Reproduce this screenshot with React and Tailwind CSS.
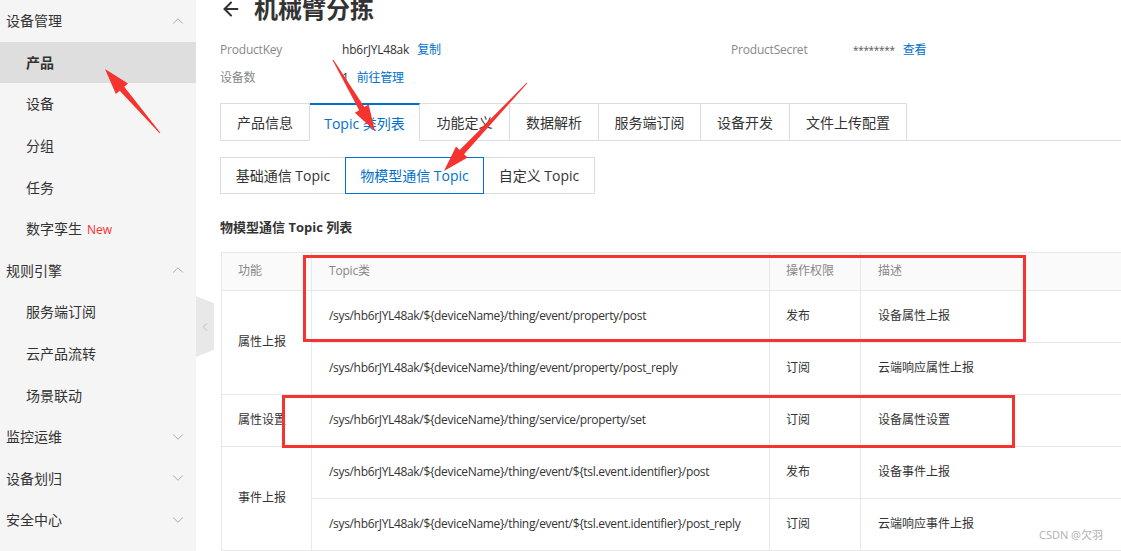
import React from "react";
import { ChevronUp, ChevronDown, ChevronLeft, ArrowLeft } from "lucide-react";

const FONT = { fontFamily: '"Open Sans", "Noto Sans CJK SC", sans-serif' };

const menu = [
  { label: "设备管理", top: true, open: true },
  { label: "产品", active: true },
  { label: "设备" },
  { label: "分组" },
  { label: "任务" },
  { label: "数字孪生", isNew: true },
  { label: "规则引擎", top: true, open: true },
  { label: "服务端订阅" },
  { label: "云产品流转" },
  { label: "场景联动" },
  { label: "监控运维", top: true },
  { label: "设备划归", top: true },
  { label: "安全中心", top: true },
];

const tabs = [
  { label: "产品信息", w: "w-[90px]" },
  { label: "Topic 类列表", w: "w-[110px]", active: true },
  { label: "功能定义", w: "w-[90px]" },
  { label: "数据解析", w: "w-[89px]" },
  { label: "服务端订阅", w: "w-[102px]" },
  { label: "设备开发", w: "w-[89px]" },
  { label: "文件上传配置", w: "w-[117px]" },
];

const subTabs = [
  { label: "基础通信 Topic", w: "w-[125px]" },
  { label: "物模型通信 Topic", w: "w-[139px]", active: true },
  { label: "自定义 Topic", w: "w-[111px]" },
];

const P = "/sys/hb6rJYL48ak/${deviceName}/thing";
const rows = [
  { fn: "属性上报", span: 2, topic: `${P}/event/property/post`, perm: "发布", desc: "设备属性上报" },
  { topic: `${P}/event/property/post_reply`, perm: "订阅", desc: "云端响应属性上报" },
  { fn: "属性设置", span: 1, topic: `${P}/service/property/set`, perm: "订阅", desc: "设备属性设置" },
  { fn: "事件上报", span: 2, topic: `${P}/event/\${tsl.event.identifier}/post`, perm: "发布", desc: "设备事件上报" },
  { topic: `${P}/event/\${tsl.event.identifier}/post_reply`, perm: "订阅", desc: "云端响应事件上报" },
];

// red annotation arrow, tail -> tip
function Arrow({ x1, y1, x2, y2 }) {
  const dx = x2 - x1, dy = y2 - y1;
  const len = Math.hypot(dx, dy);
  const ux = dx / len, uy = dy / len;
  const nx = -uy, ny = ux;
  const head = 26, hw = 8, sw = 3;
  const bx = x2 - ux * head, by = y2 - uy * head;
  const pts = [
    [x1 + nx * 0.5, y1 + ny * 0.5],
    [bx + nx * sw, by + ny * sw],
    [bx + nx * hw, by + ny * hw],
    [x2, y2],
    [bx - nx * hw, by - ny * hw],
    [bx - nx * sw, by - ny * sw],
    [x1 - nx * 0.5, y1 - ny * 0.5],
  ];
  return <polygon points={pts.map((p) => p.join(",")).join(" ")} fill="#f5332f" />;
}

export default function App() {
  return (
    <div className="relative flex h-[551px] w-[1121px] overflow-hidden bg-white text-[#333]" style={FONT}>
      <aside className="w-[196px] shrink-0 bg-[#f5f5f5]">
        {menu.map((m) => (
          <div
            key={m.label}
            className={`flex h-[41.6px] items-center justify-between pr-[9px] ${m.top ? "pl-[6px]" : "pl-[26px]"} ${m.active ? "bg-[#dedede] font-bold" : ""}`}
          >
            <span className="text-[14px] text-[#333]">
              {m.label}
              {m.isNew && <span className="ml-[5px] text-[12px] text-[#ff2d2d]">New</span>}
            </span>
            {m.top && (m.open ? <ChevronUp size={18} strokeWidth={1.3} className="text-[#aaa]" /> : <ChevronDown size={18} strokeWidth={1.3} className="text-[#aaa]" />)}
          </div>
        ))}
      </aside>

      <div
        className="absolute left-[196px] top-[296px] flex h-[61px] w-[18px] items-center justify-center bg-[#e8e8e8]"
        style={{ clipPath: "polygon(0 0, 100% 12%, 100% 88%, 0 100%)" }}
      >
        <ChevronLeft size={14} strokeWidth={1.5} className="text-[#bbb]" />
      </div>

      <main className="min-w-0 flex-1 pl-[24px]">
        <div className="-mt-[10px] flex h-[38px] items-center gap-[12px]">
          <ArrowLeft size={22} strokeWidth={2.2} className="text-[#333]" />
          <h1 className="text-[24px] font-bold leading-none text-[#333]">机械臂分拣</h1>
        </div>

        <div className="mt-[8px] grid grid-cols-[122px_389px_122px_auto] text-[12px] tracking-[-0.2px]">
          <div className="flex h-[28px] items-center text-[#888]">ProductKey</div>
          <div className="flex h-[28px] items-center">
            <span className="text-[#333]">hb6rJYL48ak</span>
            <span className="ml-[8px] text-[#0070cc]">复制</span>
          </div>
          <div className="flex h-[28px] items-center text-[#888]">ProductSecret</div>
          <div className="flex h-[28px] items-center">
            <span className="text-[10px] tracking-[-0.3px] text-[#555]">********</span>
            <span className="ml-[8px] text-[#0070cc]">查看</span>
          </div>
          <div className="flex h-[28px] items-center text-[#888]">设备数</div>
          <div className="flex h-[28px] items-center">
            <span className="text-[#333]">1</span>
            <span className="ml-[8px] text-[#0070cc]">前往管理</span>
          </div>
        </div>

        <div className="mt-[11px] flex h-[38px] border-b border-[#ddd]">
          {tabs.map((t, i) => (
            <div
              key={t.label}
              className={`${t.w} flex items-center justify-center pt-px text-[14px] ${i === 0 ? "border-l" : ""} border-r border-[#ddd] ${
                t.active ? "-mb-px border-t-2 border-t-[#0070cc] bg-white text-[#0070cc]" : "border-t text-[#333]"
              }`}
            >
              {t.label}
            </div>
          ))}
        </div>

        <div className="mt-[16px] flex h-[37px]">
          {subTabs.map((t, i) => (
            <div
              key={t.label}
              className={`${t.w} flex items-center justify-center text-[14px] ${
                t.active ? "border border-[#0070cc] text-[#0070cc]" : `border-y border-[#ddd] ${i === 0 ? "border-l" : "border-r"} text-[#333]`
              }`}
            >
              {t.label}
            </div>
          ))}
        </div>

        <h2 className="mt-[24px] text-[13px] font-bold text-[#333]">物模型通信 Topic 列表</h2>

        <table className="ml-px mt-[14px] w-[902px] border-collapse text-left text-[12px]">
          <thead>
            <tr className="h-[38px] bg-[#fafafa] text-[#888]">
              <th className="w-[90px] border border-[#e8e8e8] pl-[16px] font-normal">功能</th>
              <th className="w-[458px] border border-[#e8e8e8] pl-[17px] font-normal tracking-[-0.2px]">Topic类</th>
              <th className="w-[91px] border border-[#e8e8e8] pl-[16px] font-normal">操作权限</th>
              <th className="border border-[#e8e8e8] pl-[17px] font-normal">描述</th>
            </tr>
          </thead>
          <tbody>
            {rows.map((r, i) => (
              <tr key={i} className="h-[52px]">
                {r.fn && (
                  <td rowSpan={r.span} className="border border-[#e8e8e8] pl-[16px] text-[#333]">
                    {r.fn}
                  </td>
                )}
                <td className="border border-[#e8e8e8] pl-[17px] tracking-[-0.33px] text-[#333]">{r.topic}</td>
                <td className="border border-[#e8e8e8] pl-[16px] text-[#333]">{r.perm}</td>
                <td className="border border-[#e8e8e8] pl-[17px] text-[#333]">{r.desc}</td>
              </tr>
            ))}
            <tr className="h-[52px]">
              <td className="border border-[#e8e8e8]" />
              <td className="border border-[#e8e8e8]" />
              <td className="border border-[#e8e8e8]" />
              <td className="border border-[#e8e8e8]" />
            </tr>
          </tbody>
        </table>
      </main>

      <svg className="pointer-events-none absolute inset-0" width="1121" height="551">
        <rect x="304.5" y="256.5" width="720" height="84" fill="none" stroke="#f5332f" strokeWidth="3" />
        <rect x="283.5" y="396.5" width="730" height="50" fill="none" stroke="#f5332f" strokeWidth="3" />
        <Arrow x1={160} y1={133} x2={105} y2={69} />
        <Arrow x1={333} y1={60} x2={375} y2={131} />
        <Arrow x1={527} y1={83} x2={444} y2={171} />
      </svg>

      <div className="pointer-events-none absolute left-[1039px] top-[527px] text-[11px] text-[#b0b0b0]">CSDN @欠羽</div>
    </div>
  );
}
